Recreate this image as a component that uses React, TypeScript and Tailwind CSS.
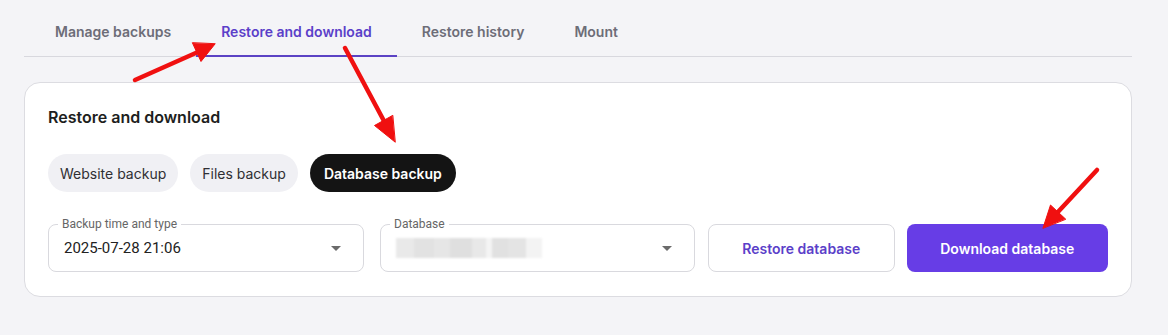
import type { ReactNode } from 'react'

const tabs = ['Manage backups', 'Restore and download', 'Restore history', 'Mount']
const kinds = ['Website backup', 'Files backup', 'Database backup']

function Caret() {
  return (
    <svg width="10" height="5" viewBox="0 0 10 5" className="shrink-0">
      <path d="M0 0h10L5 5z" fill="#6b6b6b" />
    </svg>
  )
}

function SelectField({ label, width, children }: { label: string; width: string; children: ReactNode }) {
  return (
    <div
      className={`relative h-[48px] ${width} shrink-0 rounded-[8px] border border-[#d9d9de] bg-white flex items-center pl-[15px] pr-[22px]`}
    >
      <span className="absolute left-[9px] top-[-8px] bg-white px-[4px] text-[12px] leading-[14px] text-[#666]">
        {label}
      </span>
      <div className="flex-1 min-w-0">{children}</div>
      <Caret />
    </div>
  )
}

function Arrows() {
  return (
    <svg className="pointer-events-none absolute inset-0" width="1168" height="335">
      <g fill="#f01010" stroke="#f01010" strokeLinecap="round">
        <line x1="135" y1="80" x2="198" y2="52" strokeWidth="4.5" />
        <polygon points="215,44 201,61.5 192.5,43" strokeWidth="1" strokeLinejoin="round" />
        <line x1="345" y1="48" x2="384" y2="121" strokeWidth="4.5" />
        <polygon points="395,142 374.5,125.5 392.5,115.5" strokeWidth="1" strokeLinejoin="round" />
        <line x1="1097" y1="170" x2="1057" y2="213" strokeWidth="4.5" />
        <polygon points="1043,228 1050.5,205 1065.5,219" strokeWidth="1" strokeLinejoin="round" />
      </g>
    </svg>
  )
}

export default function App() {
  return (
    <div className="relative h-[335px] w-[1168px] overflow-hidden bg-[#f4f4f7] font-['Inter',sans-serif]">
      <div className="ml-[24px] w-[1108px]">
        {/* Tabs */}
        <div className="flex border-b border-[#d8d8de] pl-[6px]">
          {tabs.map((t, i) => (
            <div
              key={t}
              className={`-mb-px px-[25px] pt-[22px] pb-[13px] text-[14px] leading-5 font-semibold border-b-2 ${
                i === 1 ? 'border-[#5b42c4] text-[#5b3fc9]' : 'border-transparent text-[#6d6d78]'
              }`}
            >
              {t}
            </div>
          ))}
        </div>

        {/* Card */}
        <div className="mt-[25px] h-[215px] rounded-[16px] border border-[#dcdce1] bg-white px-[23px] pt-[22px]">
          <h2 className="text-[16px] leading-6 font-semibold text-[#1d1e20]">Restore and download</h2>

          <div className="mt-[25px] flex gap-[12px]">
            {kinds.map((k, i) => (
              <div
                key={k}
                className={`h-[38px] flex items-center rounded-full text-[14px] ${
                  i === 2
                    ? 'px-[14px] bg-[#141414] text-white font-semibold'
                    : 'px-[12px] bg-[#f0f0f4] text-[#2f2f33]'
                }`}
              >
                {k}
              </div>
            ))}
          </div>

          <div className="mt-[32px] flex items-center font-['Roboto',sans-serif]">
            <SelectField label="Backup time and type" width="w-[316px]">
              <span className="text-[15px] text-[#222]">2025-07-28 21:06</span>
            </SelectField>
            <div className="ml-[16px]">
              <SelectField label="Database" width="w-[315px]">
                <div className="flex h-[20px] w-[146px] blur-[1px]">
                  <div className="w-[18px] bg-[#e9e9e9]" />
                  <div className="w-[20px] bg-[#e2e2e2]" />
                  <div className="w-[16px] bg-[#e6e6e6]" />
                  <div className="w-[22px] bg-[#dfdfdf]" />
                  <div className="w-[14px] bg-[#e8e8e8]" />
                  <div className="w-[6px] bg-[#f4f4f4]" />
                  <div className="w-[16px] bg-[#e1e1e1]" />
                  <div className="w-[18px] bg-[#e4e4e4]" />
                  <div className="w-[16px] bg-[#f3f3f3]" />
                </div>
              </SelectField>
            </div>
            <button
              type="button"
              className="ml-[13px] h-[48px] w-[187px] rounded-[8px] border border-[#d9d9de] bg-white font-['Inter',sans-serif] text-[14px] font-semibold text-[#5b3fc9]"
            >
              Restore database
            </button>
            <button
              type="button"
              className="ml-[12px] h-[48px] w-[202px] rounded-[8px] bg-[#673de6] font-['Inter',sans-serif] text-[14px] font-semibold text-white"
            >
              Download database
            </button>
          </div>
        </div>
      </div>
      <Arrows />
    </div>
  )
}
